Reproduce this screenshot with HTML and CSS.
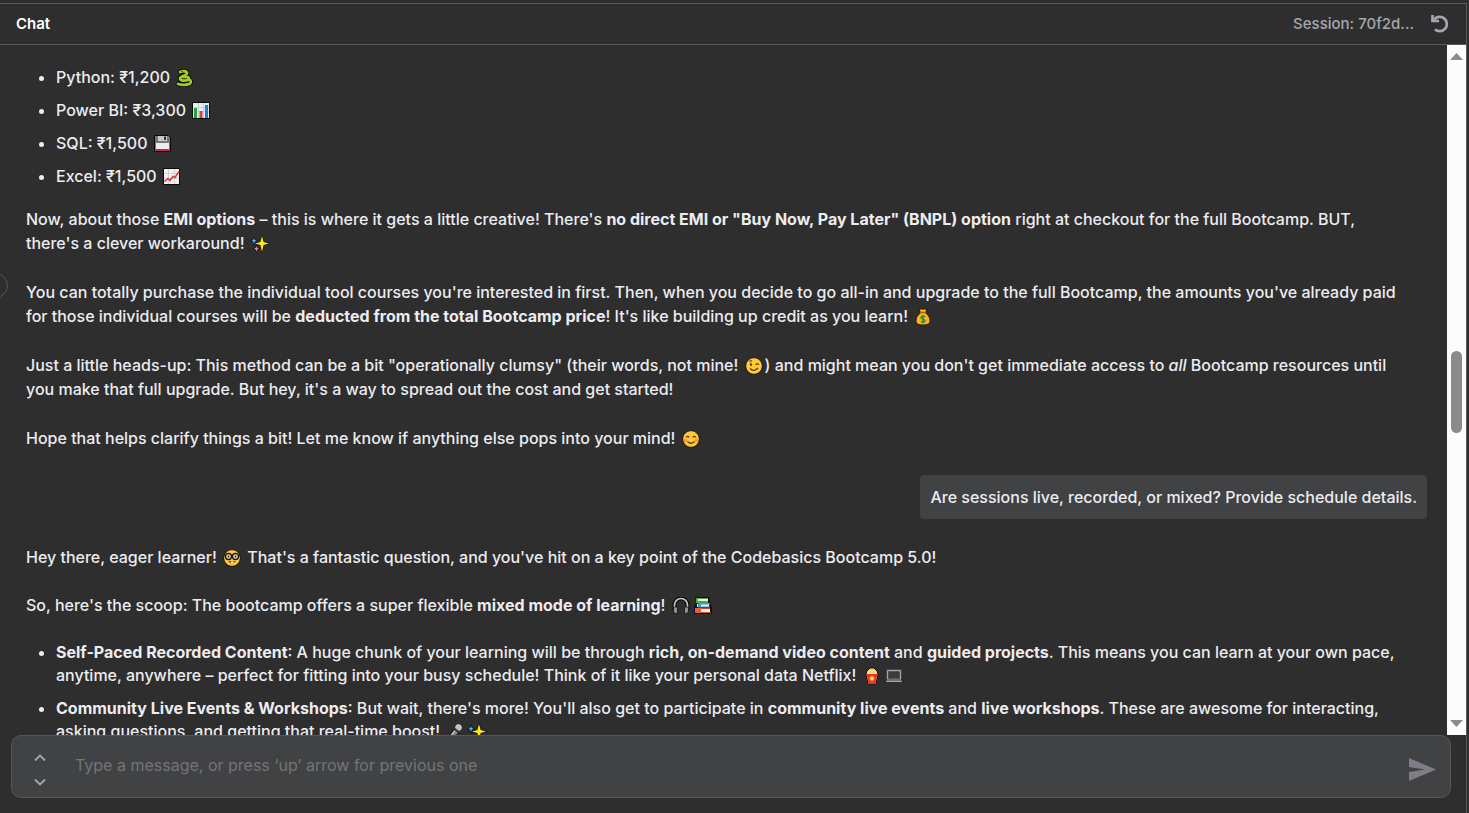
FILE: index.html
```html
<!DOCTYPE html>
<html lang="en">
<head>
<meta charset="utf-8">
<title>Chat</title>
<link rel="stylesheet" href="styles.css">
</head>
<body>
<svg class="sprite" aria-hidden="true">
  <symbol id="snake" viewBox="0 0 22 18"><g fill="none" stroke-linecap="round" stroke-linejoin="round"><path d="M6 3C9 1.500 13.500 2 13 4.500C12.500 7 6.500 6.500 6 9.500C6 12.500 15 12 15 9.500C15 7.500 12 8 10 8M16.500 11.500C19 16 9 16.500 4 15" stroke="#080b02" stroke-width="4.600"/><path d="M6 3C9 1.500 13.500 2 13 4.500C12.500 7 6.500 6.500 6 9.500C6 12.500 15 12 15 9.500C15 7.500 12 8 10 8M16.500 11.500C19 16 9 16.500 4 15" stroke="#a4ca25" stroke-width="2.800"/></g><circle cx="8" cy="2.500" r=".7" fill="#263000"/></symbol>
  <symbol id="bars" viewBox="0 0 22 18"><path fill="#e9eef2" stroke="#080808" d="M2.500.500h17v16h-17z"/><path stroke="#c5d4dc" d="M3 5.500h16M3 9.500h16M8.500 1v15M13.500 1v15"/><path fill="#22a33a" d="M4 6h3v10H4z"/><path fill="#d64532" d="M9.500 9h3v7h-3z"/><path fill="#247cd0" d="M15 3h3v13h-3z"/></symbol>
  <symbol id="disk" viewBox="0 0 22 18"><path fill="#74757a" stroke="#090909" d="M2.500.500h14l2 2v14h-16z"/><path fill="#c7c9cc" d="M6 1h9v5H6z"/><path fill="#333" d="M12 1.500h2V5h-2z"/><path fill="#ececec" d="M4 8h13v7H4z"/><path fill="#b92755" d="M4 14h13v2H4z"/></symbol>
  <symbol id="trend" viewBox="0 0 22 18"><path fill="#f0f1ee" stroke="#090909" d="M2.500.500h16v16h-16z"/><path stroke="#cbd5d7" d="M3 5.500h15M3 10.500h15M7.500 1v15M13.500 1v15"/><path d="M3.500 13.500l3.500-3 2 2 3-4 2 1 4-6" fill="none" stroke="#dc3c37" stroke-width="1.600"/></symbol>
  <symbol id="spark" viewBox="0 0 22 18"><g stroke="#111" stroke-width="1.200" paint-order="stroke"><path fill="#ffe51f" d="M13 1l1.600 5.900L20 8.500l-5.400 1.600L13 17l-1.600-6.900L6 8.500l5.400-1.600z"/><path fill="#57b9ef" d="M5 3l.8 2 2 .8-2 .8L5 9l-.8-2.400-2-.8 2-.8z"/><path fill="#e38bad" d="M7.500 11l.7 2 2 .7-2 .8-.7 2.500-.8-2.500-2-.8 2-.7z"/></g></symbol>
  <symbol id="money" viewBox="0 0 22 18"><path fill="#f7b718" stroke="#241605" d="M7 1l8 0-1.500 4c3 2 4.500 4.500 4.500 7.500 0 3-2 4.500-7 4.500s-7-1.500-7-4.500C4 9.500 5.500 7 8.500 5z"/><path stroke="#a95d11" stroke-width="1.500" d="M8 4.500h6"/><path fill="none" stroke="#23854b" stroke-width="1.300" d="M13 9c-1-1.200-4-1-4 .7S13 11 13 12.800s-3 1.800-4 .5M11 7v8.500"/></symbol>
  <symbol id="wink" viewBox="0 0 22 18"><circle cx="11" cy="9" r="8.400" fill="#ffc83d" stroke="#171006"/><ellipse cx="8" cy="7.500" rx="1" ry="1.500" fill="#503715"/><path d="M12.500 7.800q1.800-1.800 3.500 0M6.500 4.500q1-1 2.500-.5M7 11.500q4 4 8-.5" fill="none" stroke="#5a3b13" stroke-width="1.200"/></symbol>
  <symbol id="smile" viewBox="0 0 22 18"><circle cx="11" cy="9" r="8.400" fill="#ffc83d" stroke="#171006"/><g fill="#ff8a4b"><circle cx="5.500" cy="10.500" r="1.700"/><circle cx="16.500" cy="10.500" r="1.700"/></g><path d="M6 7.500q1.600-2.400 3.200 0M12.800 7.500q1.600-2.400 3.200 0M7.500 11.500q3.500 3.500 7 0" fill="none" stroke="#5a3b13" stroke-width="1.200"/></symbol>
  <symbol id="nerd" viewBox="0 0 22 18"><circle cx="11" cy="9" r="8.400" fill="#ffc83d" stroke="#171006"/><g fill="#f8e8b8" stroke="#211b18" stroke-width="1.400"><circle cx="7.500" cy="7.500" r="3"/><circle cx="14.500" cy="7.500" r="3"/></g><path d="M3 6.500h2m12 0h2" stroke="#211b18"/><circle cx="7.500" cy="7.500" r="1" fill="#352312"/><circle cx="14.500" cy="7.500" r="1" fill="#352312"/><path d="M7 12.200q4 4 8 0z" fill="#553315"/><path d="M10 12.500h2.500v1.500H10z" fill="#fff"/></symbol>
  <symbol id="phones" viewBox="0 0 22 18"><path d="M4.500 13V8a6.500 6.500 0 0 1 13 0v5" fill="none" stroke="#080808" stroke-width="4"/><path d="M4.500 13V8a6.500 6.500 0 0 1 13 0v5" fill="none" stroke="#c5c7cc" stroke-width="1.700"/><path d="M3.500 10h4v6.500h-2l-2-2zm11 0h4v4.500l-2 2h-2z" fill="#8e9096" stroke="#111" stroke-width=".8"/></symbol>
  <symbol id="books" viewBox="0 0 22 18"><path fill="#111" d="M3 0h14l1 5 2 5v7H2V10l2-4z"/><path fill="#f3f2e8" d="M6 2h10v3H6zM5 7h12v3H5zM5 12h13v4H5z"/><path fill="#50a84b" d="M4 1h12v1H6v2h10v2H4z"/><path fill="#359ad1" d="M6 6h12v1.500H9v2h9v1H6z"/><path fill="#e3603d" d="M3 11h6v5H3z"/><path fill="#c9473a" d="M9 15h10v1H9zM9 11h9v1H9z"/></symbol>
  <symbol id="popcorn" viewBox="0 0 22 18"><path d="M5 7l1-3 3-3 4 0 3 3 1 3-2 10H7z" fill="#f7d982" stroke="#1a0b08"/><path d="M5.500 7h11l-2 9.500h-7z" fill="#e5352d"/><circle cx="11" cy="11.500" r="2.200" fill="#ffd053"/></symbol>
  <symbol id="laptop" viewBox="0 0 22 18"><path d="M4.500 3.500h13v9h-13z" fill="#3a3b3e" stroke="#a2a3a7" stroke-width="1.400"/><path d="M3.500 13h15l1.500 2.500H2z" fill="#a5a5a8" stroke="#111" stroke-width=".7"/></symbol>
  <symbol id="mic" viewBox="0 0 22 18"><path d="M3 16l7-10 5 4-10 8z" fill="#7d7d82" stroke="#080808"/><circle cx="14.500" cy="4.500" r="4" fill="#c3c3c7" stroke="#111"/><path d="M10.500 5l5 4" stroke="#48484b" stroke-width="1.200"/><path d="M5 15l6-7" stroke="#c8c8cc" stroke-width="1.200"/></symbol>
</svg>
<div class="panel">
  <header class="header">
    <h1 class="title">Chat</h1>
    <div class="session">
      <span>Session: 70f2d...</span>
      <button class="icon-button" aria-label="Restart session"><svg width="20" height="20" viewBox="0 0 20 20" fill="none" stroke="currentColor" stroke-width="2.700"><path d="M4 5.500A7.200 7.200 0 1 1 5 15.500"/><path d="M2.500 1v6H9"/></svg></button>
    </div>
  </header>
  <div class="viewport">
    <main class="messages">
      <ul class="list prices">
        <li>Python: ₹1,200 <svg class="emoji"><use href="#snake"/></svg></li>
        <li>Power BI: ₹3,300 <svg class="emoji"><use href="#bars"/></svg></li>
        <li>SQL: ₹1,500 <svg class="emoji"><use href="#disk"/></svg></li>
        <li>Excel: ₹1,500 <svg class="emoji"><use href="#trend"/></svg></li>
      </ul>
      <p>Now, about those <strong>EMI options</strong> – this is where it gets a little creative! There's <strong>no direct EMI or "Buy Now, Pay Later" (BNPL) option</strong> right at checkout for the full Bootcamp. BUT, there's a clever workaround! <svg class="emoji"><use href="#spark"/></svg></p>
      <p>You can totally purchase the individual tool courses you're interested in first. Then, when you decide to go all-in and upgrade to the full Bootcamp, the amounts you've already paid for those individual courses will be <strong>deducted from the total Bootcamp price</strong>! It's like building up credit as you learn! <svg class="emoji"><use href="#money"/></svg></p>
      <p>Just a little heads-up: This method can be a bit "operationally clumsy" (their words, not mine! <svg class="emoji"><use href="#wink"/></svg>) and might mean you don't get immediate access to <em>all</em> Bootcamp resources until you make that full upgrade. But hey, it's a way to spread out the cost and get started!</p>
      <p>Hope that helps clarify things a bit! Let me know if anything else pops into your mind! <svg class="emoji"><use href="#smile"/></svg></p>
      <div class="bubble">Are sessions live, recorded, or mixed? Provide schedule details.</div>
      <p>Hey there, eager learner! <svg class="emoji"><use href="#nerd"/></svg> That's a fantastic question, and you've hit on a key point of the Codebasics Bootcamp 5.0!</p>
      <p>So, here's the scoop: The bootcamp offers a super flexible <strong>mixed mode of learning</strong>! <svg class="emoji"><use href="#phones"/></svg><svg class="emoji"><use href="#books"/></svg></p>
      <ul class="list">
        <li><strong>Self-Paced Recorded Content</strong>: A huge chunk of your learning will be through <strong>rich, on-demand video content</strong> and <strong>guided projects</strong>. This means you can learn at your own pace, anytime, anywhere – perfect for fitting into your busy schedule! Think of it like your personal data Netflix! <svg class="emoji"><use href="#popcorn"/></svg><svg class="emoji"><use href="#laptop"/></svg></li>
        <li><strong>Community Live Events &amp; Workshops</strong>: But wait, there's more! You'll also get to participate in <strong>community live events</strong> and <strong>live workshops</strong>. These are awesome for interacting, asking questions, and getting that real-time boost! <svg class="emoji"><use href="#mic"/></svg><svg class="emoji"><use href="#spark"/></svg></li>
      </ul>
    </main>
    <div class="scrollbar" aria-hidden="true">
      <svg width="13" height="7" viewBox="0 0 13 7"><path fill="#8b8b8b" d="M6.500 0L13 7H0z"/></svg>
      <div class="track"><div class="thumb"></div></div>
      <svg width="13" height="7" viewBox="0 0 13 7"><path fill="#8b8b8b" d="M0 0h13L6.500 7z"/></svg>
    </div>
  </div>
  <form class="composer">
    <div class="history">
      <button type="button" class="icon-button" aria-label="Previous message"><svg width="12" height="8" viewBox="0 0 12 8" fill="none" stroke="currentColor" stroke-width="1.800"><path d="M1 6.500l5-5 5 5"/></svg></button>
      <button type="button" class="icon-button" aria-label="Next message"><svg width="12" height="8" viewBox="0 0 12 8" fill="none" stroke="currentColor" stroke-width="1.800"><path d="M1 1.500l5 5 5-5"/></svg></button>
    </div>
    <input class="field" type="text" aria-label="Message" placeholder="Type a message, or press ‘up’ arrow for previous one">
    <button type="button" class="icon-button send" aria-label="Send"><svg width="27" height="23" viewBox="0 0 27 23"><path fill="currentColor" d="M0 0l27 11.500L0 23v-9l16-2.500L0 9z"/></svg></button>
  </form>
</div>
<div class="side-handle"></div>
</body>
</html>
```
FILE: styles.css
```css
* { box-sizing: border-box; }
body {
  margin: 0;
  height: 100vh;
  padding: 3px 2px 0 0;
  overflow: hidden;
  background: #2e2e2e;
  color: #ececf1;
  font: 540 16px/24px Inter, "Noto Sans", sans-serif;
}
.sprite { position: absolute; width: 0; height: 0; }
.panel {
  display: flex;
  flex-direction: column;
  height: 100%;
  border-top: 1px solid #5a5a5a;
  border-right: 1px solid #5a5a5a;
}
.header {
  display: flex;
  align-items: center;
  justify-content: space-between;
  height: 41px;
  flex: none;
  padding: 0 16px;
  border-bottom: 1px solid #5a5a5a;
}
.title { margin: 0; font-size: 15px; font-weight: 600; color: #fff; }
.session { display: flex; align-items: center; gap: 16px; font-size: 15px; font-weight: 500; color: #a5a7b0; }
.icon-button {
  display: flex;
  padding: 0;
  border: 0;
  background: none;
  color: #a5a7b0;
  cursor: pointer;
}
.viewport { display: flex; flex: 1; min-height: 0; }
.messages {
  display: flex;
  flex-direction: column;
  flex: 1;
  min-width: 0;
  overflow: hidden;
  padding: 21px 20px 0 26px;
}
.messages > * { flex: none; }
.messages p { margin: 0 0 25px; padding-right: 20px; }
.messages .bubble ~ p { margin-bottom: 24px; }
.messages strong { font-weight: 700; }
.list { margin: 0; padding: 0 20px 0 30px; line-height: 23px; }
.list li { margin-bottom: 10px; }
.prices { margin-bottom: 9px; }
.emoji { width: 22px; height: 18px; vertical-align: -4px; }
.bubble {
  align-self: flex-end;
  margin-bottom: 26px;
  padding: 10px;
  border-radius: 4px;
  background: #414244;
}
.scrollbar {
  display: flex;
  flex-direction: column;
  align-items: center;
  width: 19px;
  padding: 8px 0;
  background: #fcfcfc;
}
.track { flex: 1; padding-top: 291px; }
.thumb { width: 11px; height: 82px; border-radius: 6px; background: #8b8b8b; }
.composer {
  display: flex;
  align-items: center;
  flex: none;
  height: 63px;
  margin: 0 15px 15px 11px;
  padding: 0 14px 0 22px;
  border: 1px solid #55565a;
  border-radius: 10px;
  background: #414244;
}
.history { display: flex; flex-direction: column; gap: 16px; padding-top: 6px; }
.field {
  flex: 1;
  min-width: 0;
  margin: 0 20px 4px 29px;
  padding: 0;
  border: 0;
  outline: 0;
  background: none;
  color: #ececf1;
  font: 400 16px/24px Inter, "Noto Sans", sans-serif;
}
.field::placeholder { color: #737478; opacity: 1; }
.send { padding-top: 6px; color: #7d7e86; }
.side-handle {
  position: absolute;
  top: 273px;
  left: -17px;
  width: 25px;
  height: 25px;
  border: 1px solid #55565a;
  border-radius: 50%;
}
```
